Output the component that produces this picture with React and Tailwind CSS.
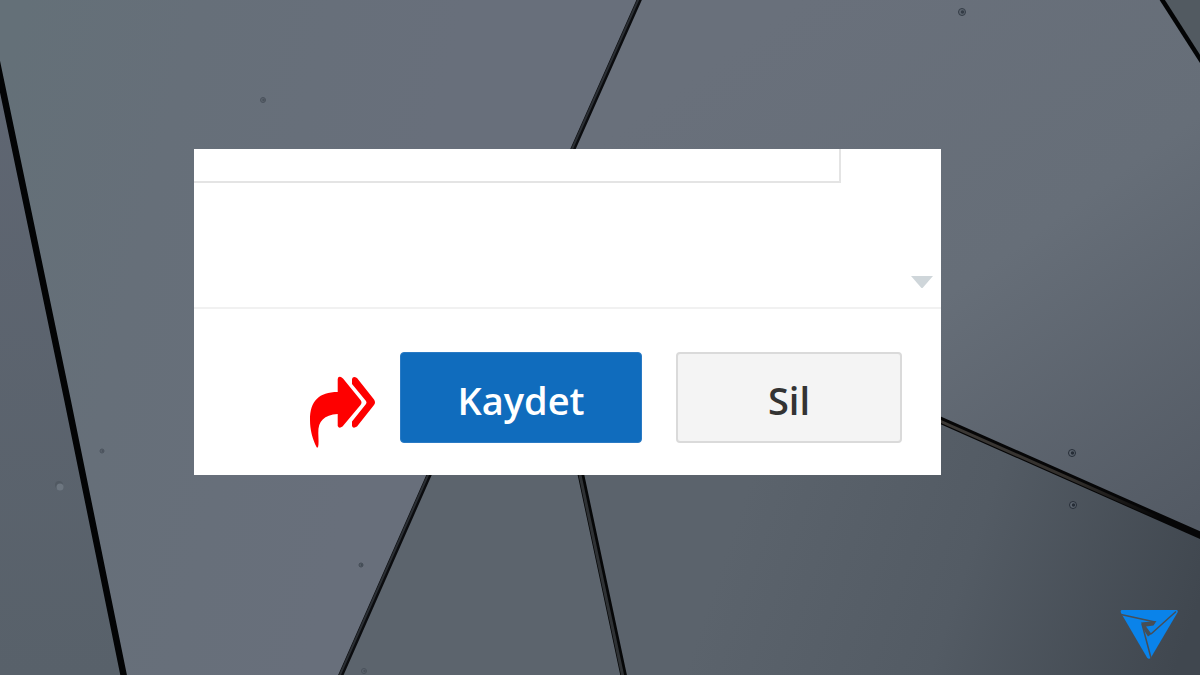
function Rivet({ x, y, r = 3, tone = '#3f4751' }) {
    return (
        <g>
            <circle cx={x} cy={y} r={r} fill="#5d656f" stroke={tone} />
            <circle cx={x + 0.5} cy={y} r={r / 2} fill={tone} />
        </g>
    );
}

/**
 * Wall of metal plates with dark seams behind the dialog
 */
function Backdrop() {
    return (
        <svg
            className="absolute inset-0 -z-10 w-full h-full"
            viewBox="0 0 1200 675"
            preserveAspectRatio="xMidYMid slice"
            aria-hidden="true"
        >
            <defs>
                <linearGradient id="plateTop" gradientUnits="userSpaceOnUse" x1="0" y1="100" x2="420" y2="200">
                    <stop offset="0" stopColor="#647078" />
                    <stop offset="0.4" stopColor="#666f79" />
                    <stop offset="1" stopColor="#686f7b" />
                </linearGradient>
                <linearGradient id="plateRight" gradientUnits="userSpaceOnUse" x1="800" y1="0" x2="1180" y2="530">
                    <stop offset="0" stopColor="#69707b" />
                    <stop offset="0.5" stopColor="#666e78" />
                    <stop offset="1" stopColor="#535a64" />
                </linearGradient>
                <linearGradient id="plateBottom" gradientUnits="userSpaceOnUse" x1="760" y1="450" x2="1200" y2="600">
                    <stop offset="0" stopColor="#5b636c" />
                    <stop offset="0.5" stopColor="#535b64" />
                    <stop offset="1" stopColor="#40474f" />
                </linearGradient>
                <linearGradient id="plateLeft" x1="0" y1="0" x2="0" y2="1">
                    <stop offset="0" stopColor="#5f6672" />
                    <stop offset="1" stopColor="#58616a" />
                </linearGradient>
                <linearGradient id="seamEdge" gradientUnits="userSpaceOnUse" x1="940" y1="420" x2="1160" y2="520">
                    <stop offset="0" stopColor="#3d3a37" />
                    <stop offset="0.6" stopColor="#33302d" />
                    <stop offset="1" stopColor="#060607" />
                </linearGradient>
            </defs>

            {/* Plates */}
            <rect width="1200" height="675" fill="url(#plateTop)" />
            <path d="M0 74 L123 675 H0Z" fill="url(#plateLeft)" />
            <path d="M640 0 H1162 L1200 60 V535 L530 240Z" fill="url(#plateRight)" />
            <path d="M530 240 L340 675 H624Z" fill="#5c646d" />
            <path d="M530 240 L1200 535 V675 H624Z" fill="url(#plateBottom)" />
            <path d="M1162 0 L1200 60 V0Z" fill="#525a61" />

            {/* Seams */}
            <path d="M-6 48 L31 225 L67.5 400 L124 677" fill="none" stroke="#030405" strokeWidth="6.5" />
            <path d="M640 -2 L573 149 L429 475 L340 677" fill="none" stroke="#0b0c0f" strokeWidth="5" />
            <path d="M639 -2 L572 149 L428 475 L339 677" fill="none" stroke="#2b2f34" strokeWidth="2" />
            <path d="M530 240 L581 475 L624 677" fill="none" stroke="#060708" strokeWidth="6.5" />
            <path d="M529 240 L580 475 L623 677" fill="none" stroke="#2f3235" strokeWidth="3" />
            <path d="M530 240 L941 420.500 L1202 536" fill="none" stroke="#060607" strokeWidth="7" />
            <path d="M900 403.500 L941 421.500 L1160 518.500" fill="none" stroke="url(#seamEdge)" strokeWidth="3" />
            <path d="M1161 -2 L1202 62" fill="none" stroke="#030405" strokeWidth="4.5" />

            <Rivet x={962} y={12} r={3.500} tone="#343c46" />
            <Rivet x={263} y={100} r={2.500} tone="#4a525c" />
            <Rivet x={102} y={451} r={2} tone="#4a525c" />
            <Rivet x={361} y={565} r={2} tone="#414953" />
            <Rivet x={364} y={671} r={2.500} tone="#4a525b" />
            <Rivet x={1072} y={453} r={3.500} tone="#262d37" />
            <Rivet x={1073} y={505} r={3.500} tone="#262d37" />
            <circle cx="59" cy="485" r="4" fill="#515962" />
            <circle cx="60" cy="487" r="3.5" fill="#6d7680" />
        </svg>
    );
}

function ShareArrow() {
    return (
        <svg className="w-[66px] h-[101px] shrink-0" viewBox="0 0 66 101" fill="#fe0000" aria-hidden="true">
            <path d="M27.700 32 Q28 29 31 30 L33 31.500 L50.500 53 Q52.500 55.500 50.500 58 L32.500 79.500 Q29 82 27.700 79 V67 C14 68 8 74 8.300 86 C8.400 92 9 97 8 100.300 Q7 101 6.500 100 C2.500 92 0 83 0 73 C0 54 9 45 27.700 45Z" />
            <path d="M42 32 Q43 28.500 47 31 L64 52.500 Q66 55.500 64 58 L47 79.500 Q43 82 42 79 V74.500 L56 57 Q57 55.500 56 54 L42 37Z" />
        </svg>
    );
}

function BrandMark() {
    return (
        <svg className="w-[58px] h-[50px]" viewBox="0 0 58 50" role="img" aria-label="Logo">
            <path d="M2 1 H56 Q58.500 1 57.500 3.500 L31 48.500 Q29 51 27 48.500 L1 4 Q0 1 2 1Z" fill="#0a83ea" />
            <path d="M1 5.500 L35 13 M56 2.500 L31 25 M22 15 L31 49" fill="none" stroke="#474e56" strokeWidth="1.500" />
            <path d="M21 13.500 L36.500 12 L33.500 16.500 L26 17.500 L31.500 25 L28 27.500 L24.500 22Z" fill="#474e56" />
        </svg>
    );
}

function Dialog() {
    return (
        <section className="flex flex-col bg-white">
            {/* Field, cut off by the upper edge of the dialog */}
            <textarea
                aria-label="Not"
                className="block h-[34px] mr-[100px] resize-none border-r-2 border-b-2 border-[#e4e4e4] bg-white outline-none"
            />

            <div className="flex justify-end items-end h-[126px] px-[7px] pb-[18px] border-b-2 border-[#f1f1f1]">
                <svg className="w-6 h-[14px]" viewBox="0 0 24 14" fill="#cfd6da" aria-hidden="true">
                    <path d="M1 1 H23 L13 12.500 Q12 13.500 11 12.500Z" />
                </svg>
            </div>

            {/* Actions */}
            <div className="flex justify-end items-center pt-[38px] pr-[39px] pb-[27px]">
                <ShareArrow />
                <button
                    type="button"
                    className="ml-6 w-[242px] h-[91px] rounded-[4px] border border-[#2a7ac4] bg-[#106cbd] pt-1 text-[38px] leading-[48px] font-semibold text-white"
                >
                    Kaydet
                </button>
                <button
                    type="button"
                    className="ml-[34px] w-[226px] h-[91px] rounded-[4px] border-2 border-[#dadada] bg-[#f4f4f4] pt-1 text-[38px] leading-[48px] font-semibold text-[#333333]"
                >
                    Sil
                </button>
            </div>
        </section>
    );
}

function App() {
    return (
        <main className="relative isolate flex flex-col min-h-screen overflow-hidden pt-[149px] font-['Open_Sans','Noto_Sans',sans-serif]">
            <Backdrop />
            <div className="pl-[194px] pr-[259px]">
                <Dialog />
            </div>
            <footer className="flex justify-end mt-auto pr-[22px] pb-4">
                <BrandMark />
            </footer>
        </main>
    );
}

export default App;
